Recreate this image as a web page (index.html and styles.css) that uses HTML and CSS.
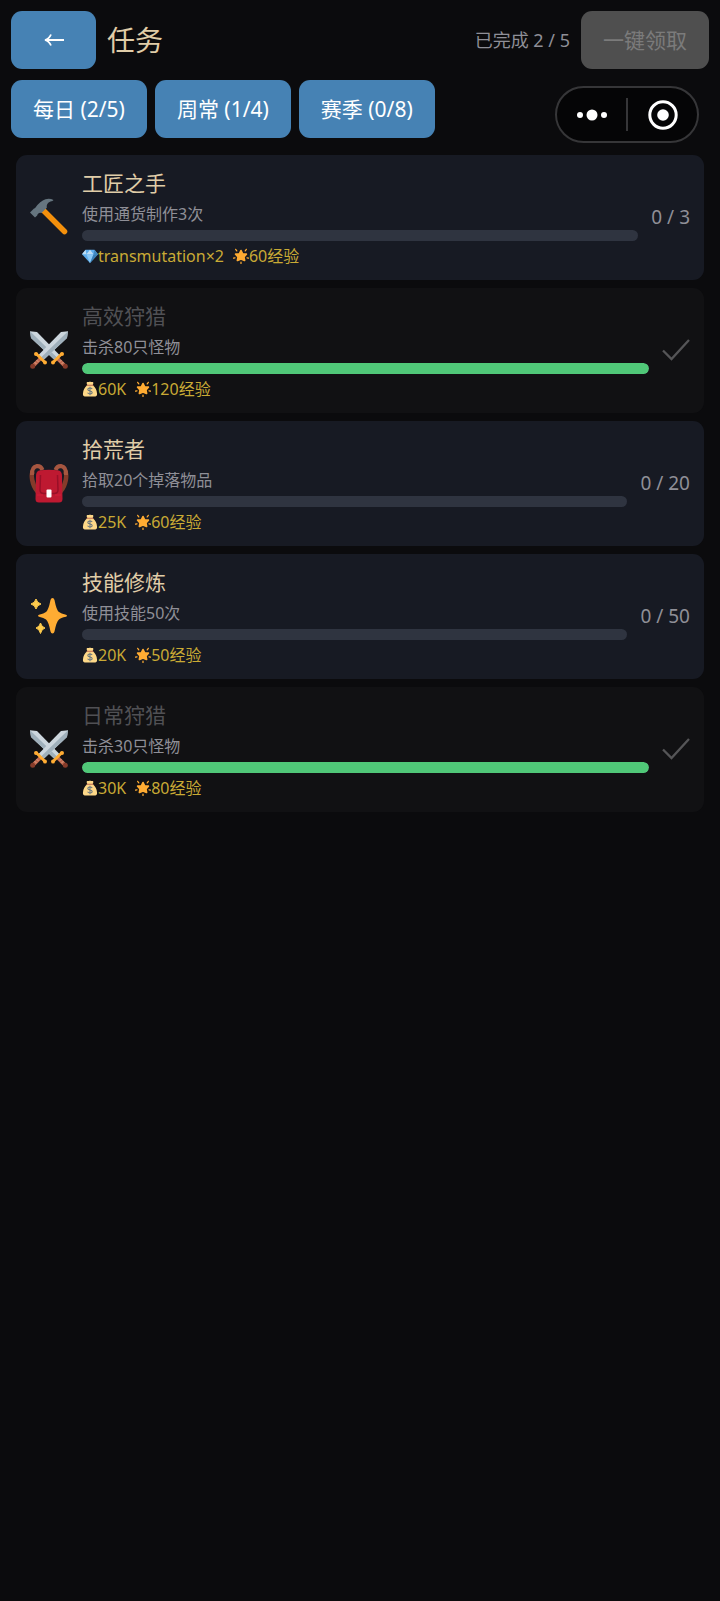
FILE: index.html
```html
<!DOCTYPE html>
<html lang="zh-CN">
<head>
<meta charset="utf-8">
<meta name="viewport" content="width=device-width, initial-scale=1">
<title>任务</title>
<link rel="stylesheet" href="styles.css">
</head>
<body>
<svg class="sprite" aria-hidden="true">
  <symbol id="hammer" viewBox="0 0 40 40">
    <path d="M14.500 13.500 L35.500 34.500" stroke="#f4900c" stroke-width="5.500" stroke-linecap="round"/>
    <path d="M1 15.500 L5 11.500 Q6 11.500 6.500 10.500 Q11 4 16.500 2.200 Q21 1.200 24.500 3 Q24 4 21.500 4.500 Q17 6.200 17.800 10.800 L12.500 16 Q10 14.800 8.500 17.500 L8.200 18.500 L6 20.500 Z" fill="#66757f"/>
  </symbol>
  <symbol id="swords" viewBox="0 0 40 40">
    <g id="sword">
      <path d="M1 1.200 L8 2 L30.500 25 L25.500 30 L2 8 Z" fill="#ccd6dd"/>
      <path d="M1 1.200 L28 27.500 L25.500 30 L2 8 Z" fill="#9fb0bb"/>
      <path d="M28 28 L35 35" stroke="#c1694f" stroke-width="3.800"/>
      <path d="M32.500 30 L30.500 32 M34.500 32 L32.500 34" stroke="#d99e82" stroke-width="1"/>
      <path d="M24.500 32 L32.500 24" stroke="#ffac33" stroke-width="2.800" stroke-linecap="round"/>
      <circle cx="24" cy="32.500" r="2" fill="#ffac33"/><circle cx="33" cy="24" r="2" fill="#ffac33"/>
      <circle cx="36.300" cy="36.300" r="2.500" fill="#853b2a"/>
    </g>
    <use href="#sword" transform="matrix(-1 0 0 1 40 0)"/>
  </symbol>
  <symbol id="backpack" viewBox="0 0 40 40">
    <g id="strap">
      <path d="M5 8 Q1.800 9 3.200 17 Q4.500 24 8.500 28.500" fill="none" stroke="#853b2a" stroke-width="4.500"/>
      <path d="M13.500 7 Q12 2.800 8 3 Q2.500 4 3 12" fill="none" stroke="#a65640" stroke-width="4"/>
    </g>
    <use href="#strap" transform="matrix(-1 0 0 1 40 0)"/>
    <path d="M10 7.500 Q20 6 30 7.500 Q33 8.500 33 13 L33.500 36 Q33.500 39.500 30 39.500 L10 39.500 Q6.500 39.500 6.500 36 L7 13 Q7 8.500 10 7.500 Z" fill="#be1931"/>
    <path d="M11.500 12 L11 27 Q11 30.500 15 30.500 L25 30.500 Q29 30.500 29 27 L28.500 12" fill="none" stroke="#981028" stroke-width="1.500"/>
    <path d="M8 32 L14 32 M26 32 L32 32" stroke="#d31d3b" stroke-width="1"/>
    <rect x="17.500" y="26.500" width="5" height="8" rx="1" fill="#fff"/>
  </symbol>
  <symbol id="sparkles" viewBox="0 0 40 40">
    <path d="M23.500 2 Q25 2 25.500 4 Q27.500 14.500 30 16 Q32 17.500 37 18.800 Q39 19.800 37 20.800 Q31.500 22 30 23.500 Q27.500 25.500 25.500 35.500 Q25 37.500 23.500 37.500 Q22 37.500 21.500 35.500 Q19.500 25.500 17 23.500 Q15 22 10 20.800 Q8 19.800 10 18.800 Q15 17.500 17 16 Q19.500 14 21.500 4 Q22 2 23.500 2 Z" fill="#ffac33"/>
    <path d="M7 3 Q8 7 12 8 Q8 9 7 13 Q6 9 2 8 Q6 7 7 3 Z M11.500 27 Q12.500 31 16 32 Q12.500 33 11.500 37.500 Q10.500 33 7 32 Q10.500 31 11.500 27 Z" fill="#ffcc4d" stroke="#ffcc4d" stroke-linejoin="round"/>
  </symbol>
  <symbol id="gem" viewBox="0 0 36 36">
    <path d="M8 4 H28 L36 14 L18 34 L0 14 Z" fill="#5dadec"/>
    <path d="M8 4 L10 14 H0 Z M18 4 L26 14 H10 Z" fill="#bdddf4"/>
    <path d="M28 4 L26 14 H36 Z" fill="#4289c1"/>
    <path d="M10 14 H26 L18 34 Z" fill="#8ccaf7"/>
    <path d="M26 14 H36 L18 34 Z" fill="#3a7fb5"/>
  </symbol>
  <symbol id="moneybag" viewBox="0 0 36 36">
    <path d="M12 9 Q9 3 12 2 Q15 3 18 1 Q21 3 24 2 Q27 3 24 9 Q34 18 34 29 Q34 35 27 35 H9 Q2 35 2 29 Q2 18 12 9 Z" fill="#fdd888"/>
    <path d="M11.500 9.500 H24.500" stroke="#bf6952" stroke-width="2.500" stroke-linecap="round"/>
    <path d="M23 18 Q21 15.500 17.500 16 Q13 16.500 13 19 Q13 21.500 18 22.500 Q23 23.500 23 26.500 Q23 29 18 29 Q14.500 29 12.500 26.500 M18 13 V32" fill="none" stroke="#67757f" stroke-width="2.300"/>
  </symbol>
  <symbol id="star" viewBox="0 0 36 36">
    <path d="M18 6 L21.500 13 L30 14 L24.500 20 L26 28 L18 24.500 L10 28 L11.500 20 L6 14 L14.500 13 Z" fill="#ffac33" stroke="#ffac33" stroke-width="4" stroke-linejoin="round"/>
    <path d="M6 3 L8.500 6.500 M30 3 L27.500 6.500 M1 23 L4.500 22 M35 23 L31.500 22 M18 31.500 V35" stroke="#ffac33" stroke-width="2.800" stroke-linecap="round"/>
  </symbol>
  <symbol id="check" viewBox="0 0 28 28">
    <path d="M1 14.500 L9.500 23 L27 4" fill="none" stroke="#555557" stroke-width="2.300"/>
  </symbol>
</svg>

<header class="topbar">
  <button class="btn back" type="button" aria-label="返回"><svg class="arrow" viewBox="0 0 20 14" aria-hidden="true"><path d="M20 7 H1.500 M7 1.500 Q5 6 1 7 Q5 8 7 12.500" fill="none" stroke="#fff" stroke-width="1.800"/></svg></button>
  <h1 class="title">任务</h1>
  <span class="summary">已完成 2 / 5</span>
  <button class="btn" type="button" disabled>一键领取</button>
</header>

<nav class="tabs">
  <button class="btn" type="button">每日 (2/5)</button>
  <button class="btn" type="button">周常 (1/4)</button>
  <button class="btn" type="button">赛季 (0/8)</button>
</nav>

<div class="capsule">
  <button class="capsule-btn" type="button" aria-label="更多"><svg class="dots" viewBox="0 0 32 12"><g fill="#fff"><circle cx="4" cy="6" r="3"/><circle cx="16" cy="6" r="5.500"/><circle cx="28" cy="6" r="3"/></g></svg></button>
  <button class="capsule-btn" type="button" aria-label="关闭"><svg class="target" viewBox="0 0 30 30"><circle cx="15" cy="15" r="13.200" fill="none" stroke="#fff" stroke-width="3"/><circle cx="15" cy="15" r="5.800" fill="#fff"/></svg></button>
</div>

<main class="quests">
  <article class="quest">
    <svg class="icon" aria-hidden="true"><use href="#hammer"/></svg>
    <div class="body">
      <h2 class="name">工匠之手</h2>
      <p class="desc">使用通货制作3次</p>
      <progress class="bar" value="0" max="3" aria-label="工匠之手"></progress>
      <p class="rewards"><span class="reward"><svg class="mini" aria-hidden="true"><use href="#gem"/></svg>transmutation×2</span><span class="reward"><svg class="mini" aria-hidden="true"><use href="#star"/></svg>60经验</span></p>
    </div>
    <span class="count">0 / 3</span>
  </article>
  <article class="quest done">
    <svg class="icon" aria-hidden="true"><use href="#swords"/></svg>
    <div class="body">
      <h2 class="name">高效狩猎</h2>
      <p class="desc">击杀80只怪物</p>
      <progress class="bar" value="80" max="80" aria-label="高效狩猎"></progress>
      <p class="rewards"><span class="reward"><svg class="mini" aria-hidden="true"><use href="#moneybag"/></svg>60K</span><span class="reward"><svg class="mini" aria-hidden="true"><use href="#star"/></svg>120经验</span></p>
    </div>
    <svg class="check" role="img" aria-label="已完成"><use href="#check"/></svg>
  </article>
  <article class="quest">
    <svg class="icon" aria-hidden="true"><use href="#backpack"/></svg>
    <div class="body">
      <h2 class="name">拾荒者</h2>
      <p class="desc">拾取20个掉落物品</p>
      <progress class="bar" value="0" max="20" aria-label="拾荒者"></progress>
      <p class="rewards"><span class="reward"><svg class="mini" aria-hidden="true"><use href="#moneybag"/></svg>25K</span><span class="reward"><svg class="mini" aria-hidden="true"><use href="#star"/></svg>60经验</span></p>
    </div>
    <span class="count">0 / 20</span>
  </article>
  <article class="quest">
    <svg class="icon" aria-hidden="true"><use href="#sparkles"/></svg>
    <div class="body">
      <h2 class="name">技能修炼</h2>
      <p class="desc">使用技能50次</p>
      <progress class="bar" value="0" max="50" aria-label="技能修炼"></progress>
      <p class="rewards"><span class="reward"><svg class="mini" aria-hidden="true"><use href="#moneybag"/></svg>20K</span><span class="reward"><svg class="mini" aria-hidden="true"><use href="#star"/></svg>50经验</span></p>
    </div>
    <span class="count">0 / 50</span>
  </article>
  <article class="quest done">
    <svg class="icon" aria-hidden="true"><use href="#swords"/></svg>
    <div class="body">
      <h2 class="name">日常狩猎</h2>
      <p class="desc">击杀30只怪物</p>
      <progress class="bar" value="30" max="30" aria-label="日常狩猎"></progress>
      <p class="rewards"><span class="reward"><svg class="mini" aria-hidden="true"><use href="#moneybag"/></svg>30K</span><span class="reward"><svg class="mini" aria-hidden="true"><use href="#star"/></svg>80经验</span></p>
    </div>
    <svg class="check" role="img" aria-label="已完成"><use href="#check"/></svg>
  </article>
</main>
</body>
</html>
```

FILE: styles.css
```css
* {
  box-sizing: border-box;
}

body {
  margin: 0;
  min-height: 100vh;
  background: #0b0b0d;
  color: #8f8f97;
  font-family: "Noto Sans", "Noto Sans CJK SC", sans-serif;
}

h1, h2, p {
  margin: 0;
  font-weight: 400;
}

.sprite {
  display: none;
}

.topbar {
  display: flex;
  align-items: center;
  gap: 11px;
  padding: 11px 11px 0;
}

.btn {
  height: 58px;
  padding: 0 22px;
  border: 0;
  border-radius: 11px;
  background: #4682b4;
  color: #fff;
  font: inherit;
  font-size: 21px;
  line-height: 30px;
  white-space: nowrap;
}

.btn:disabled {
  background: #4f4f4f;
  color: #7b7b7b;
}

.back {
  display: flex;
  align-items: center;
  justify-content: center;
  width: 85px;
}

.arrow {
  width: 20px;
  height: 14px;
}

.title {
  flex: 1;
  color: #e0cda8;
  font-size: 28px;
  line-height: 40px;
}

.summary {
  font-size: 18px;
  line-height: 24px;
}

.tabs {
  display: flex;
  gap: 8px;
  padding: 11px 11px 0;
}

.capsule {
  position: absolute;
  top: 86px;
  right: 21px;
  display: flex;
  width: 144px;
  height: 57px;
  padding: 10px 0;
  border: 2px solid #363638;
  border-radius: 29px;
  background: #050506;
}

.capsule-btn {
  display: flex;
  flex: 1;
  align-items: center;
  justify-content: center;
  padding: 0;
  border: 0;
  background: none;
}

.capsule-btn + .capsule-btn {
  border-left: 2px solid #363638;
}

.dots {
  width: 32px;
  height: 12px;
}

.target {
  width: 30px;
  height: 30px;
}

.quests {
  display: flex;
  flex-direction: column;
  gap: 8px;
  padding: 17px 16px;
}

.quest {
  display: flex;
  align-items: center;
  gap: 13px;
  padding: 13px 14px 14px 13px;
  border-radius: 11px;
  background: #171a23;
}

.icon {
  flex: none;
  width: 40px;
  height: 40px;
}

.body {
  display: flex;
  flex: 1;
  flex-direction: column;
  gap: 5px;
  min-width: 0;
}

.name {
  color: #e0cda8;
  font-size: 21px;
  line-height: 30px;
}

.desc {
  font-size: 16px;
  line-height: 22px;
}

.bar {
  display: block;
  width: 100%;
  height: 11px;
  border: 0;
  border-radius: 6px;
  background: #2f3440;
  overflow: hidden;
  appearance: none;
}

.bar::-webkit-progress-bar {
  background: #2f3440;
}

.bar::-webkit-progress-value {
  border-radius: 6px;
  background: #50c878;
}

.rewards {
  display: flex;
  gap: 9px;
  color: #c9aa35;
  font-size: 16px;
  line-height: 20px;
}

.reward {
  display: flex;
  align-items: center;
}

.mini {
  width: 16px;
  height: 16px;
}

.count {
  font-size: 19px;
  line-height: 26px;
  white-space: nowrap;
}

.check {
  flex: none;
  width: 28px;
  height: 28px;
}

.done {
  background: #111113;
}

.done .name {
  color: #505054;
}
```
